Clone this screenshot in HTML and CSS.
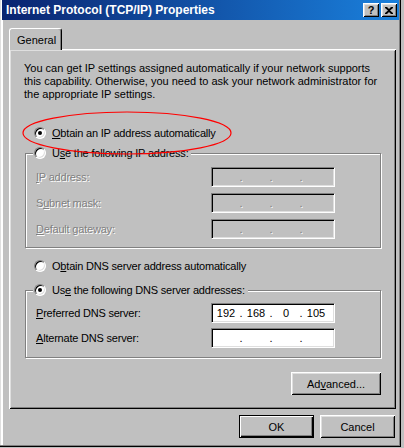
FILE: index.html
```html
<!DOCTYPE html>
<html lang="en">
<head>
    <meta charset="UTF-8">
    <title>Internet Protocol (TCP/IP) Properties</title>
    <link rel="stylesheet" href="styles.css">
</head>
<body>
<div class="window">
    <div class="titlebar">
        <span class="title">Internet Protocol (TCP/IP) Properties</span>
        <div class="caption-btns">
            <div class="cap-btn help">?</div>
            <div class="cap-btn">
                <svg width="8" height="7" viewBox="0 0 8 7"><path d="M0 0h2l2 2 2-2h2v1L5 3.5 8 6v1H6L4 5 2 7H0V6l3-2.5L0 1z" fill="#000"/></svg>
            </div>
        </div>
    </div>

    <div class="content">
        <div class="tabs"><div class="tab">General</div></div>

        <div class="panel">
            <p class="intro">You can get IP settings assigned automatically if your network supports<br>this capability. Otherwise, you need to ask your network administrator for<br>the appropriate IP settings.</p>

            <div class="radio-row first"><span class="radio checked"></span><span><u>O</u>btain an IP address automatically</span></div>

            <div class="group ip-group">
                <div class="legend"><span class="radio"></span><span>U<u>s</u>e the following IP address:</span></div>
                <div class="field disabled">
                    <span class="label"><u>I</u>P address:</span>
                    <div class="ipbox"><span class="oct"></span><span class="dot">.</span><span class="oct"></span><span class="dot">.</span><span class="oct"></span><span class="dot">.</span><span class="oct"></span></div>
                </div>
                <div class="field disabled">
                    <span class="label">S<u>u</u>bnet mask:</span>
                    <div class="ipbox"><span class="oct"></span><span class="dot">.</span><span class="oct"></span><span class="dot">.</span><span class="oct"></span><span class="dot">.</span><span class="oct"></span></div>
                </div>
                <div class="field disabled">
                    <span class="label"><u>D</u>efault gateway:</span>
                    <div class="ipbox"><span class="oct"></span><span class="dot">.</span><span class="oct"></span><span class="dot">.</span><span class="oct"></span><span class="dot">.</span><span class="oct"></span></div>
                </div>
            </div>

            <div class="radio-row dns-auto"><span class="radio"></span><span>O<u>b</u>tain DNS server address automatically</span></div>

            <div class="group dns-group">
                <div class="legend"><span class="radio checked"></span><span>Us<u>e</u> the following DNS server addresses:</span></div>
                <div class="field">
                    <span class="label"><u>P</u>referred DNS server:</span>
                    <div class="ipbox"><span class="oct">192</span><span class="dot">.</span><span class="oct">168</span><span class="dot">.</span><span class="oct">0</span><span class="dot">.</span><span class="oct">105</span></div>
                </div>
                <div class="field">
                    <span class="label"><u>A</u>lternate DNS server:</span>
                    <div class="ipbox"><span class="oct"></span><span class="dot">.</span><span class="oct"></span><span class="dot">.</span><span class="oct"></span><span class="dot">.</span><span class="oct"></span></div>
                </div>
            </div>

            <div class="adv-row"><div class="btn adv">Ad<u>v</u>anced...</div></div>
        </div>

        <div class="footer">
            <div class="btn default">OK</div>
            <div class="btn">Cancel</div>
        </div>
    </div>

    <!-- red mark drawn over the first option -->
    <svg class="mark" width="212" height="46" viewBox="0 0 212 46"><ellipse cx="106" cy="23" rx="104" ry="21" fill="none" stroke="#f00" stroke-width="1.2"/></svg>
</div>
</body>
</html>
```

FILE: styles.css
```css
body {
    margin: 0;
    background: #c0c0c0;
    font-family: "Liberation Sans", Arial, sans-serif;
    font-size: 11px;
    color: #000;
}

.window {
    position: relative;
    width: 401px;
    height: 447px;
    box-sizing: border-box;
    background: #c0c0c0;
    border-right: 1px solid #000;
    border-bottom: 1px solid #000;
    box-shadow: inset -1px -1px #808080, inset 1px 0 #dfdfdf, inset 3px 0 #fff;
}

/* title bar */
.titlebar {
    height: 20px;
    margin: 0 1px 0 2px;
    padding: 0 2px 0 4px;
    display: flex;
    align-items: center;
    justify-content: space-between;
    background: linear-gradient(to right, #0a2470, #1a80dc);
}
.title {
    color: #fff;
    font-weight: bold;
    font-size: 12px;
}
.caption-btns { display: flex; gap: 2px; }
.cap-btn {
    width: 16px;
    height: 14px;
    box-sizing: border-box;
    background: #c0c0c0;
    display: flex;
    align-items: center;
    justify-content: center;
    box-shadow: inset 1px 1px #fff, inset -1px -1px #000, inset 2px 2px #dfdfdf, inset -2px -2px #808080;
}
.cap-btn.help { font-weight: bold; font-size: 11px; line-height: 14px; }

.content { padding: 8px 5px 0 9px; }

/* tab */
.tabs { display: flex; }
.tab {
    position: relative;
    z-index: 1;
    width: 53px;
    height: 22px;
    box-sizing: border-box;
    margin-bottom: -1px;
    padding: 5px 0 0 7px;
    background: #c0c0c0;
    border-top: 1px solid #fff;
    border-left: 1px solid #fff;
    border-right: 1px solid #000;
    border-radius: 3px 3px 0 0;
    box-shadow: inset -1px 0 #808080;
}

.panel {
    width: 387px;
    height: 360px;
    box-sizing: border-box;
    padding: 13px 0 0 15px;
    box-shadow: inset 1px 1px #fff, inset -1px -1px #000, inset 2px 2px #dfdfdf, inset -2px -2px #808080;
}

.intro { margin: 0; line-height: 13px; }

/* radios */
.radio-row { display: flex; align-items: center; height: 14px; margin-left: 10px; gap: 6px; }
.radio-row.first { margin-top: 25px; }
.radio-row.dns-auto { margin-top: 11px; }
.radio-row span + span,
.legend span + span,
.label { letter-spacing: -0.2px; }
.radio {
    position: relative;
    flex: none;
    width: 12px;
    height: 12px;
    box-sizing: border-box;
    border-radius: 50%;
    background: #fff;
    border: 1px solid;
    border-color: #808080 #fff #fff #808080;
    box-shadow: inset 1px 1px #000, inset -1px -1px #dfdfdf;
}
.radio.checked::after {
    content: "";
    position: absolute;
    left: 3px;
    top: 3px;
    width: 4px;
    height: 4px;
    border-radius: 50%;
    background: #000;
}

/* group boxes */
.group {
    margin: 13px 15px 0 1px;
    padding: 0 0 8px 10px;
    border: 1px solid #808080;
    box-shadow: 1px 1px #fff, inset 1px 1px #fff;
}
.group.dns-group { margin-top: 17px; padding-bottom: 9px; }
.legend {
    display: flex;
    width: fit-content;
    align-items: center;
    gap: 6px;
    height: 14px;
    margin: -8px 0 0 -3px;
    padding: 0 3px 0 1px;
    background: #c0c0c0;
}

.field { display: flex; align-items: center; height: 20px; margin-top: 6px; }
.legend + .field { margin-top: 7px; }
.dns-group .legend + .field { margin-top: 6px; }
.dns-group .field + .field { margin-top: 5px; }
.label { width: 175px; }

.ipbox {
    width: 124px;
    height: 20px;
    box-sizing: border-box;
    display: flex;
    align-items: center;
    padding-left: 1px;
    background: #fff;
    border: 1px solid;
    border-color: #808080 #fff #fff #808080;
    box-shadow: inset 1px 1px #000, inset -1px -1px #dfdfdf;
}
.oct { width: 26px; text-align: center; }
.dot { width: 4px; text-align: center; }

.disabled .label,
.disabled .dot { color: #808080; text-shadow: 1px 1px 0 #fff; }
.disabled .ipbox { background: #c0c0c0; }

/* buttons */
.btn {
    width: 75px;
    height: 23px;
    box-sizing: border-box;
    display: flex;
    align-items: center;
    justify-content: center;
    background: #c0c0c0;
    box-shadow: inset 1px 1px #fff, inset -1px -1px #000, inset 2px 2px #dfdfdf, inset -2px -2px #808080;
}
.btn.default {
    border: 1px solid #000;
    box-shadow: inset 1px 1px #fff, inset -1px -1px #000, inset -2px -2px #808080;
}
.adv-row { display: flex; justify-content: flex-end; margin: 14px 15px 0 0; }
.btn.adv { width: 90px; }

.footer { display: flex; justify-content: flex-end; gap: 6px; margin-top: 6px; }

.mark { position: absolute; left: 21px; top: 110px; }
```
